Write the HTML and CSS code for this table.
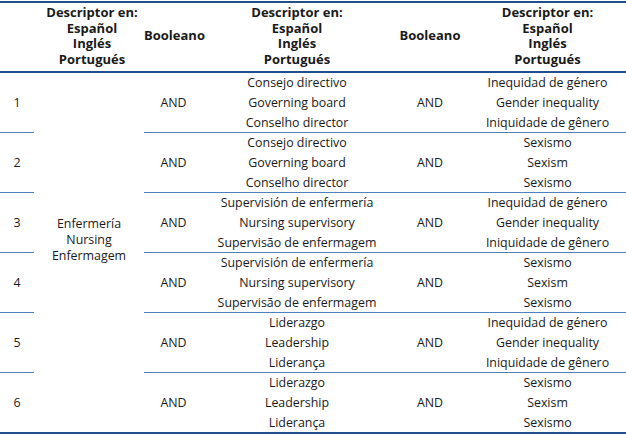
FILE: index.html
```html
<!DOCTYPE html>
<html lang="es">
<head>
<meta charset="utf-8">
<title>Descriptores</title>
<link rel="stylesheet" href="styles.css">
</head>
<body>
<table class="grid">
  <colgroup>
    <col class="c-num">
    <col class="c-term">
    <col class="c-bool">
    <col class="c-desc">
    <col class="c-bool2">
    <col class="c-desc2">
  </colgroup>
  <thead>
    <tr>
      <th></th>
      <th class="h-first">Descriptor en:<br>Español<br>Inglés<br>Portugués</th>
      <th>Booleano</th>
      <th>Descriptor en:<br>Español<br>Inglés<br>Portugués</th>
      <th>Booleano</th>
      <th>Descriptor en:<br>Español<br>Inglés<br>Portugués</th>
    </tr>
  </thead>
  <tbody>
    <tr>
      <td class="num">1</td>
      <td class="term" rowspan="6">Enfermería<br>Nursing<br>Enfermagem</td>
      <td>AND</td>
      <td class="desc"><div class="lines">Consejo directivo<br>Governing board<br>Conselho director</div></td>
      <td>AND</td>
      <td class="desc"><div class="lines">Inequidad de género<br>Gender inequality<br>Iniquidade de gênero</div></td>
    </tr>
    <tr>
      <td class="num">2</td>
      <td>AND</td>
      <td class="desc"><div class="lines">Consejo directivo<br>Governing board<br>Conselho director</div></td>
      <td>AND</td>
      <td class="desc"><div class="lines">Sexismo<br>Sexism<br>Sexismo</div></td>
    </tr>
    <tr>
      <td class="num">3</td>
      <td>AND</td>
      <td class="desc"><div class="lines">Supervisión de enfermería<br>Nursing supervisory<br>Supervisão de enfermagem</div></td>
      <td>AND</td>
      <td class="desc"><div class="lines">Inequidad de género<br>Gender inequality<br>Iniquidade de gênero</div></td>
    </tr>
    <tr>
      <td class="num">4</td>
      <td>AND</td>
      <td class="desc"><div class="lines">Supervisión de enfermería<br>Nursing supervisory<br>Supervisão de enfermagem</div></td>
      <td>AND</td>
      <td class="desc"><div class="lines">Sexismo<br>Sexism<br>Sexismo</div></td>
    </tr>
    <tr>
      <td class="num">5</td>
      <td>AND</td>
      <td class="desc"><div class="lines">Liderazgo<br>Leadership<br>Liderança</div></td>
      <td>AND</td>
      <td class="desc"><div class="lines">Inequidad de género<br>Gender inequality<br>Iniquidade de gênero</div></td>
    </tr>
    <tr class="last">
      <td class="num">6</td>
      <td>AND</td>
      <td class="desc"><div class="lines">Liderazgo<br>Leadership<br>Liderança</div></td>
      <td>AND</td>
      <td class="desc"><div class="lines">Sexismo<br>Sexism<br>Sexismo</div></td>
    </tr>
  </tbody>
</table>
</body>
</html>
```

FILE: styles.css
```css
html, body {
  margin: 0;
  padding: 0;
  background: #ffffff;
}

body {
  padding-top: 1px;
  font-family: "Open Sans", "Noto Sans", sans-serif;
  font-size: 12.4px;
  color: #1a1a1a;
}

.grid {
  width: 626px;
  table-layout: fixed;
  border-collapse: separate;
  border-spacing: 0;
}

.c-num { width: 34px; }
.c-term { width: 110px; }
.c-bool { width: 59px; }
.c-desc { width: 188px; }
.c-bool2 { width: 78px; }
.c-desc2 { width: 157px; }

.grid th {
  padding: 0 0 2px 0;
  height: 66px;
  font-size: 13px;
  font-weight: 700;
  line-height: 15.5px;
  text-align: center;
  vertical-align: middle;
  border-top: 2px solid #1f4f8f;
  border-bottom: 2px solid #1f4f8f;
}

.grid th.h-first {
  padding-left: 6px;
}

.grid td {
  padding: 0;
  height: 59px;
  text-align: center;
  vertical-align: middle;
  line-height: 20px;
  border-bottom: 1px solid #4f81bd;
}

.grid td.desc {
  vertical-align: top;
}

.lines {
  line-height: 20px;
  margin-bottom: -1px;
}

.grid td.term {
  border-bottom: 2px solid #1f4f8f;
  line-height: 16px;
  padding-bottom: 26px;
}

.grid tr.last td {
  border-bottom: 2px solid #1f4f8f;
}
```
